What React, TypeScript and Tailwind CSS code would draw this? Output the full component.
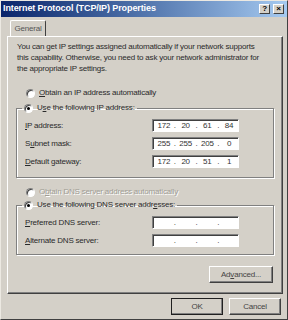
import React from 'react';

const font = { fontFamily: '"Liberation Sans", Arial, sans-serif' };

const Radio = ({ checked = false, disabled = false }: { checked?: boolean; disabled?: boolean }) => (
  <span className="relative inline-block w-[9px] h-[9px] shrink-0 rounded-full border border-t-[#808080] border-l-[#808080] border-b-white border-r-white bg-white shadow-[inset_1px_1px_0_#404040]">
    {checked && (
      <span className={`absolute left-[2px] top-[2px] w-[3px] h-[3px] rounded-full ${disabled ? 'bg-[#808080]' : 'bg-black'}`} />
    )}
  </span>
);

const IpField = ({ parts }: { parts?: string[] }) => {
  const vals = parts ?? ['', '', '', ''];
  return (
    <div className="w-[87px] h-[13px] bg-white border border-t-[#808080] border-l-[#808080] border-b-white border-r-white shadow-[inset_1px_1px_0_#404040] flex items-center pl-[2px] text-[8px] leading-none text-[#333]">
      {vals.map((v, i) => (
        <React.Fragment key={i}>
          <span className="w-[18px] text-center">{v}</span>
          {i < 3 && <span className="w-[4px] text-center">.</span>}
        </React.Fragment>
      ))}
    </div>
  );
};

const Btn = ({ children, width, isDefault = false }: { children: React.ReactNode; width: string; isDefault?: boolean }) => (
  <div className={`${width} h-[17px] flex items-center justify-center text-[8px] text-[#444] bg-[#d4d0c8] border ${isDefault ? 'border-[#202020]' : 'border-t-white border-l-white border-b-[#404040] border-r-[#404040]'} shadow-[inset_-1px_-1px_0_#808080]`}>
    {children}
  </div>
);

const Row = ({ label, parts }: { label: React.ReactNode; parts?: string[] }) => (
  <div className="flex items-center h-[13px]">
    <span className="w-[135px] pl-[8px]">{label}</span>
    <IpField parts={parts} />
  </div>
);

export default function App() {
  return (
    <div style={font} className="w-[288px] h-[320px] bg-[#d4d0c8] overflow-hidden border-l border-t border-l-[#ece9e2] border-t-[#ece9e2] border-r border-b border-r-[#404040] border-b-[#404040] text-[8px] tracking-[-0.2px] text-[#2a2a2a]">
      {/* title bar */}
      <div className="h-[16px] flex items-center pl-[2px] pr-[3px] bg-gradient-to-r from-[#0a246a] to-[#a6caf0]">
        <span className="text-white font-bold text-[9px] tracking-[-0.1px]">Internet Protocol (TCP/IP) Properties</span>
        <div className="ml-auto flex gap-[3px]">
          <div className="w-[11px] h-[10px] bg-[#d4d0c8] border border-t-white border-l-white border-b-[#404040] border-r-[#404040] flex items-center justify-center text-[8px] font-bold leading-none text-black">?</div>
          <div className="w-[11px] h-[10px] bg-[#d4d0c8] border border-t-white border-l-white border-b-[#404040] border-r-[#404040] flex items-center justify-center text-[8px] font-bold leading-none text-black">×</div>
        </div>
      </div>

      {/* tab */}
      <div className="pl-[9px] pt-[3px]">
        <div className="w-[36px] h-[16px] border-t border-l border-t-white border-l-white border-r border-r-[#404040] rounded-t-[2px] flex items-center justify-center text-[8px] text-[#555]">General</div>
      </div>

      {/* panel */}
      <div className="ml-[6px] w-[276px] h-[258px] border-t border-l border-t-white border-l-white border-r border-b border-r-[#404040] border-b-[#404040] shadow-[inset_-1px_-1px_0_#808080] px-[8px] pt-[4px]">
        <p className="leading-[11px] pl-[1px] whitespace-nowrap">
          You can get IP settings assigned automatically if your network supports<br />
          this capability. Otherwise, you need to ask your network administrator for<br />
          the appropriate IP settings.
        </p>

        <div className="mt-[13px] flex items-center gap-[4px] pl-[10px] h-[12px]">
          <Radio />
          <span><u>O</u>btain an IP address automatically</span>
        </div>

        <fieldset className="mt-[3px] border border-[#808080] shadow-[inset_1px_1px_0_#fff,1px_1px_0_#fff] pb-[9px] flex flex-col gap-[5px]">
          <legend className="ml-[5px] px-[2px] flex items-center gap-[4px] h-[12px]">
            <Radio checked />
            <span>U<u>s</u>e the following IP address:</span>
          </legend>
          <div className="h-0" />
          <Row label={<><u>I</u>P address:</>} parts={['172', '20', '61', '84']} />
          <Row label={<>S<u>u</u>bnet mask:</>} parts={['255', '255', '205', '0']} />
          <Row label={<><u>D</u>efault gateway:</>} parts={['172', '20', '51', '1']} />
        </fieldset>

        <div className="mt-[8px] flex items-center gap-[4px] pl-[10px] h-[12px] text-[#a09d95] [text-shadow:1px_1px_0_#fff]">
          <Radio disabled />
          <span>O<u>b</u>tain DNS server address automatically</span>
        </div>

        <fieldset className="mt-[1px] border border-[#808080] shadow-[inset_1px_1px_0_#fff,1px_1px_0_#fff] pb-[7px] flex flex-col gap-[5px]">
          <legend className="ml-[5px] px-[2px] flex items-center gap-[4px] h-[12px]">
            <Radio checked />
            <span>Use the following DNS server addr<u>e</u>sses:</span>
          </legend>
          <div className="h-0" />
          <Row label={<><u>P</u>referred DNS server:</>} />
          <Row label={<><u>A</u>lternate DNS server:</>} />
        </fieldset>

        <div className="mt-[11px] flex justify-end pr-[1px]">
          <Btn width="w-[64px]">Ad<u>v</u>anced...</Btn>
        </div>
      </div>

      {/* dialog buttons */}
      <div className="mt-[4px] flex justify-end gap-[6px] pr-[6px]">
        <Btn width="w-[52px]" isDefault>OK</Btn>
        <Btn width="w-[52px]">Cancel</Btn>
      </div>
    </div>
  );
}
